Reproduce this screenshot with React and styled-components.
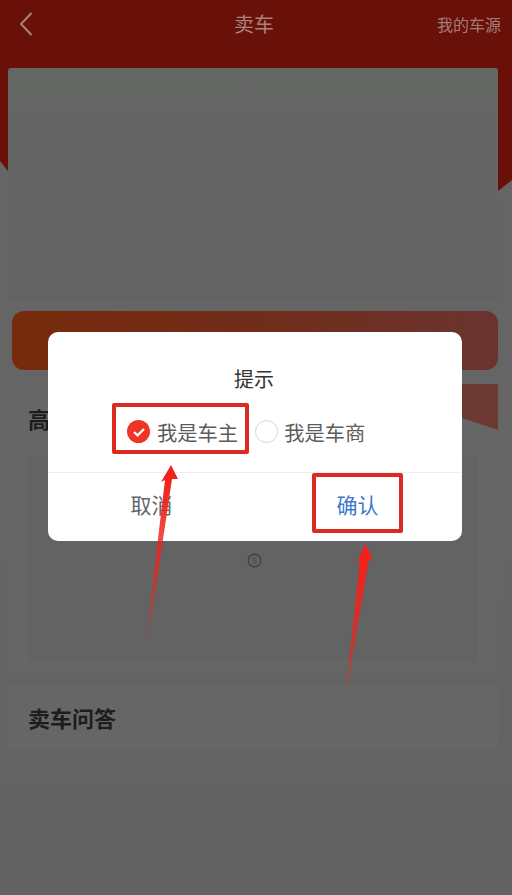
import React from 'react';
import styled, { createGlobalStyle } from 'styled-components';

const GlobalStyle = createGlobalStyle`
  html, body {
    margin: 0;
    padding: 0;
    background: #636363;
  }
  * {
    box-sizing: border-box;
  }
`;

const Page = styled.div`
  position: relative;
  width: 512px;
  height: 895px;
  overflow: hidden;
  background: linear-gradient(180deg, #656565 0%, #656565 60%, #626262 100%);
  font-family: "Noto Sans CJK SC", "Liberation Sans", sans-serif;
`;

const HeroBackdrop = styled.div`
  position: absolute;
  top: 0;
  left: 0;
  width: 512px;
  height: 192px;
  background: #691009;
  clip-path: polygon(0 0, 100% 0, 100% 180px, 498px 191px, 8px 171px, 0 161px);
`;

const Content = styled.div`
  position: relative;
  display: flex;
  flex-direction: column;
`;

const Header = styled.header`
  display: grid;
  grid-template-columns: 215px 40px 1fr;
  align-items: center;
  height: 48px;
  margin-bottom: 20px;
  padding: 0 11px 0 19px;
`;

const BackButton = styled.div`
  display: flex;
  align-items: center;
`;

const HeaderTitle = styled.div`
  color: #a8837a;
  font-size: 20px;
  line-height: 28px;
`;

const HeaderLink = styled.div`
  justify-self: end;
  color: #a37d75;
  font-size: 16px;
  line-height: 24px;
`;

const HeroCard = styled.div`
  width: 490px;
  height: 232px;
  margin-left: 8px;
  border-radius: 3px 3px 0 0;
  background: linear-gradient(180deg, #646664 0%, #636363 100%);
`;

const SellButton = styled.div`
  width: 486px;
  height: 59px;
  margin: 11px 0 0 12px;
  border-radius: 12px;
  background: linear-gradient(90deg, #772a0c 0%, #712d1a 50%, #6b3430 100%);
`;

const Section = styled.section`
  position: relative;
  width: 490px;
  height: 286px;
  margin: 14px 0 0 8px;
  padding: 19px 20px 8px;
  background: #666666;
`;

const SectionTitle = styled.h2`
  margin: 0;
  color: #1d1d1d;
  font-size: 22px;
  font-weight: 700;
  line-height: 30px;
`;

const SectionBadge = styled.div`
  position: absolute;
  top: 0;
  right: 0;
  width: 36px;
  height: 46px;
  background: #6d3933;
  clip-path: polygon(0 0, 100% 0, 100% 100%, 0 34px);
`;

const MediaPanel = styled.div`
  height: 206px;
  margin-top: 23px;
  background: #636363;
`;

const FaqCard = styled.section`
  display: flex;
  align-items: center;
  width: 490px;
  height: 64px;
  margin: 15px 0 0 8px;
  padding: 0 20px;
  background: #666666;
`;

const Overlay = styled.div`
  position: absolute;
  inset: 0;
  padding: 332px 0 0 48px;
`;

const Dialog = styled.div`
  width: 414px;
  height: 209px;
  border-radius: 10px;
  background: #ffffff;
`;

const DialogBody = styled.div`
  position: relative;
  height: 141px;
  padding: 71px 0 0 64px;
  border-bottom: 1px solid #eeeeee;
`;

const DialogTitle = styled.div`
  position: absolute;
  top: 33px;
  left: -2px;
  right: 0;
  text-align: center;
  color: #333333;
  font-size: 20px;
  line-height: 28px;
`;

const Options = styled.div`
  display: flex;
  align-items: flex-start;
  gap: 6px;
`;

const Option = styled.div`
  display: flex;
  align-items: center;
  gap: ${(p) => (p.$marked ? '7px' : '6px')};
  height: 51px;
  color: #5c5c5c;
  font-size: 20.3px;
  padding: ${(p) => (p.$marked ? '6px 7px 0 11px' : '6px 0 0 0')};
  border: ${(p) => (p.$marked ? '4px solid #dc2a20' : 'none')};
  border-radius: 2px;
`;

const Radio = styled.span`
  display: flex;
  align-items: center;
  justify-content: center;
  width: 23px;
  height: 23px;
  border-radius: 50%;
  background: ${(p) => (p.$checked ? '#ee3424' : '#ffffff')};
  border: ${(p) => (p.$checked ? 'none' : '1px solid #d6d6d6')};
`;

const DialogFooter = styled.div`
  display: grid;
  grid-template-columns: 207px 205px;
  justify-items: center;
  height: 68px;
`;

const FooterButton = styled.div`
  display: flex;
  align-items: center;
  justify-content: center;
  width: 91px;
  height: 60px;
  padding-top: 2px;
  font-size: 21px;
  color: ${(p) => (p.$primary ? '#3b78cf' : '#666666')};
  border: 4px solid ${(p) => (p.$primary ? '#dc2a20' : 'transparent')};
  border-radius: 2px;
`;

const ArrowLayer = styled.svg`
  position: absolute;
  top: 0;
  left: 0;
  pointer-events: none;
`;

const InfoIcon = styled.svg`
  position: absolute;
  top: 553px;
  left: 247px;
`;

const App = () => {
  return (
    <Page>
      <GlobalStyle />
      <HeroBackdrop />
      <Content>
        <Header>
          <BackButton>
            <svg width="14" height="24" viewBox="0 0 14 24" fill="none">
              <path d="M12.5 1 L2 12 L12.5 23" stroke="#a8837a" strokeWidth="2" />
            </svg>
          </BackButton>
          <HeaderTitle>卖车</HeaderTitle>
          <HeaderLink>我的车源</HeaderLink>
        </Header>
        <HeroCard />
        <SellButton />
        <Section>
          <SectionBadge />
          <SectionTitle>高</SectionTitle>
          <MediaPanel />
        </Section>
        <FaqCard>
          <SectionTitle>卖车问答</SectionTitle>
        </FaqCard>
      </Content>

      <InfoIcon width="15" height="15" viewBox="0 0 15 15" fill="none">
        <circle cx="7.5" cy="7.5" r="6.3" stroke="#3c3c3c" strokeWidth="1.2" />
        <path d="M9.2 5.4 H6.2 V7.4 H9 V10 H6" stroke="#4a4a4a" strokeWidth="0.9" />
      </InfoIcon>

      <Overlay>
        <Dialog>
          <DialogBody>
            <DialogTitle>提示</DialogTitle>
            <Options>
              <Option $marked>
                <Radio $checked>
                  <svg width="14" height="12" viewBox="0 0 14 12" fill="none">
                    <path d="M2 6 L5.6 9.4 L12 3" stroke="#ffffff" strokeWidth="2.2" />
                  </svg>
                </Radio>
                我是车主
              </Option>
              <Option>
                <Radio />
                我是车商
              </Option>
            </Options>
          </DialogBody>
          <DialogFooter>
            <FooterButton>取消</FooterButton>
            <FooterButton $primary>确认</FooterButton>
          </DialogFooter>
        </Dialog>
      </Overlay>

      <ArrowLayer width="512" height="895" viewBox="0 0 512 895">
        <defs>
          <linearGradient id="arrowLeft" x1="146" y1="640" x2="168" y2="480" gradientUnits="userSpaceOnUse">
            <stop offset="0" stopColor="#f0231c" stopOpacity="0.05" />
            <stop offset="0.4" stopColor="#f0231c" stopOpacity="0.7" />
            <stop offset="1" stopColor="#f0231c" />
          </linearGradient>
          <linearGradient id="arrowRight" x1="344" y1="706" x2="364" y2="560" gradientUnits="userSpaceOnUse">
            <stop offset="0" stopColor="#f0231c" stopOpacity="0.05" />
            <stop offset="0.4" stopColor="#f0231c" stopOpacity="0.7" />
            <stop offset="1" stopColor="#f4211b" />
          </linearGradient>
        </defs>
        <path d="M146 640 L165 480 L161 482 L171 465 L178 479 L172 479 L148 640 Z" fill="url(#arrowLeft)" />
        <path d="M344 706 L360 561 L357 562 L365 544 L373 559 L369 559 Z" fill="url(#arrowRight)" />
      </ArrowLayer>
    </Page>
  );
};

export default App;
